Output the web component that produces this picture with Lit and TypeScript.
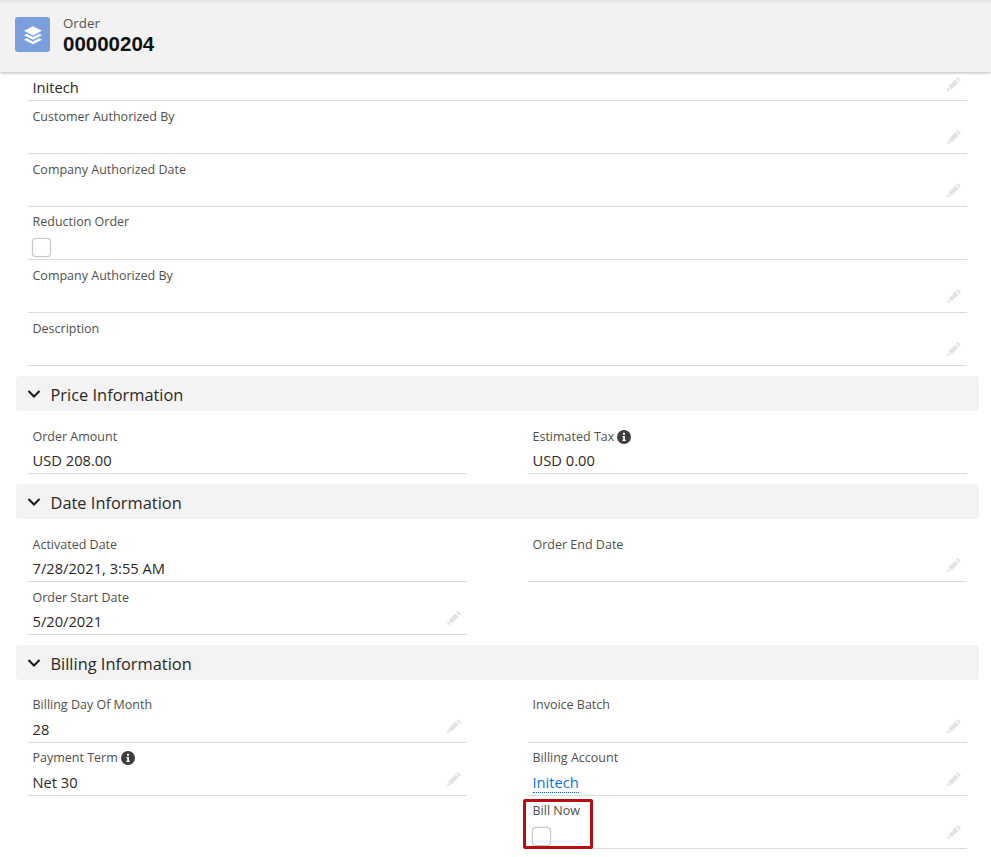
import { LitElement, html, css, svg } from "lit";
import { customElement } from "lit/decorators.js";

const pencil = html`<svg class="pencil" viewBox="0 0 14 14" aria-hidden="true"><path d="M10.8 0 14 3.2 12.4 4.8 9.2 1.6Z"/><path d="M8.4 2.4 11.6 5.6 4.6 12.6 1.4 9.4Z"/><path d="M0.8 10.2 3.8 13.2 0 14Z"/></svg>`;
const info = html`<svg class="info" viewBox="0 0 14 14" aria-hidden="true"><circle cx="7" cy="7" r="7" fill="#3e3e3c"/><rect x="6" y="2.8" width="2" height="2" fill="#fff"/><path d="M5.4 6h2.6v3.8h.8v1.2H5.4V9.8h.8V7.2h-.8Z" fill="#fff"/></svg>`;
const chevron = svg`<path d="M2.5 5 8 10.5 13.5 5" fill="none" stroke="#181818" stroke-width="2"/>`;

type F = { label: string; value?: string; edit?: boolean; info?: boolean; check?: boolean; link?: boolean; mark?: boolean; high?: boolean };

@customElement("app-root")
export class AppRoot extends LitElement {
  static styles = css`
    :host { display: block; height: 857px; overflow: hidden; background: #fff; font-family: "Open Sans", "Noto Sans", sans-serif; color: #181818; }
    .head { height: 72px; box-sizing: border-box; padding: 0 0 3px 15px; background: linear-gradient(#e4e4e4, #f2f2f2 4px); display: flex; align-items: center; gap: 13px; box-shadow: 0 1px 3px rgba(0,0,0,.28); position: relative; }
    .logo { width: 35px; height: 35px; border-radius: 3px; background: #7b9fdc; display: flex; align-items: center; justify-content: center; }
    .logo svg { width: 24px; height: 24px; fill: #fff; }
    .titles { display: flex; flex-direction: column; }
    .obj { font-size: 13.3px; line-height: 17px; padding-top: 1px; color: #555; }
    .num { font-family: "Liberation Sans", Arial, sans-serif; font-weight: 700; font-size: 20.5px; line-height: 23px; color: #111; }
    .body { padding: 0 12px 0 16px; }
    .grid { display: grid; grid-template-columns: 439px 439px; column-gap: 61px; padding: 0 12px; }
    .full { padding: 0 12px; }
    .field { height: 53px; box-sizing: border-box; border-bottom: 1px solid #dddbda; position: relative; padding: 0 4.5px; }
    .first { height: 29px; padding-top: 4px; }
    .label { font-size: 12.5px; line-height: 16px; padding-top: 8px; color: #514f4d; display: flex; align-items: center; gap: 3px; }
    .high .label { padding-top: 7px; }
    .high .value { padding-top: 6px; }
    .high .box { margin-top: 8px; }
    .value { font-size: 14.7px; line-height: 20px; padding-top: 5px; color: #2b2826; }
    .first .value { padding-top: 1px; }
    .link { color: #0a76d2; border-bottom: 1px dotted #0a76d2; }
    .pencil { position: absolute; right: 6px; bottom: 9px; width: 14px; height: 14px; fill: #e2e2e2; }
    .info { width: 14px; height: 14px; }
    .box { display: block; width: 17px; height: 17px; margin: 7px 0 0 -0.5px; border: 1px solid #c9c7c5; border-radius: 4px; background: #fff; box-shadow: 0 0 1px #bbb; }
    .mark { position: absolute; left: -5px; top: 3px; width: 70px; height: 50px; box-sizing: border-box; border: 3px solid #b80d12; border-radius: 2px; }
    .sec { height: 35px; box-sizing: border-box; padding: 2px 0 0 10px; margin-top: 10px; margin-bottom: 10px; background: #f3f3f3; border-radius: 4px; display: flex; align-items: center; gap: 8.5px; font-size: 16.4px; color: #2b2826; }
    .sec svg { width: 16px; height: 16px; margin-top: -2px; }
  `;

  field(f: F, first = false) {
    return html`<div class="field ${first ? "first" : ""} ${f.high ? "high" : ""}">
      ${f.label ? html`<div class="label">${f.label}${f.info ? info : ""}</div>` : ""}
      ${f.check ? html`<span class="box"></span>` : f.value ? html`<div class="value">${f.link ? html`<span class="link">${f.value}</span>` : f.value}</div>` : ""}
      ${f.edit ? pencil : ""}
      ${f.mark ? html`<div class="mark"></div>` : ""}
    </div>`;
  }

  section(title: string, fields: (F | null)[]) {
    return html`
      <div class="sec"><svg viewBox="0 0 16 16">${chevron}</svg><span>${title}</span></div>
      <div class="grid">${fields.map((f) => (f ? this.field(f) : html`<div></div>`))}</div>`;
  }

  render() {
    return html`
      <div class="head">
        <div class="logo"><svg viewBox="0 0 24 24"><path d="M12 3.2 21 7.8 12 12.4 3 7.8Z"/><path d="M5.6 10.8 12 14.1 18.4 10.8 21 12.2 12 16.8 3 12.2Z"/><path d="M5.6 15.3 12 18.6 18.4 15.3 21 16.7 12 21.3 3 16.7Z"/></svg></div>
        <div class="titles"><span class="obj">Order</span><span class="num">00000204</span></div>
      </div>
      <div class="body">
        <div class="full">
          ${this.field({ label: "", value: "Initech", edit: true }, true)}
          ${this.field({ label: "Customer Authorized By", edit: true })}
          ${this.field({ label: "Company Authorized Date", edit: true })}
          ${this.field({ label: "Reduction Order", check: true, high: true })}
          ${this.field({ label: "Company Authorized By", edit: true })}
          ${this.field({ label: "Description", edit: true })}
        </div>
        ${this.section("Price Information", [
          { label: "Order Amount", value: "USD 208.00" },
          { label: "Estimated Tax", value: "USD 0.00", info: true },
        ])}
        ${this.section("Date Information", [
          { label: "Activated Date", value: "7/28/2021, 3:55 AM" },
          { label: "Order End Date", edit: true },
          { label: "Order Start Date", value: "5/20/2021", edit: true },
          null,
        ])}
        ${this.section("Billing Information", [
          { label: "Billing Day Of Month", value: "28", edit: true, high: true },
          { label: "Invoice Batch", edit: true, high: true },
          { label: "Payment Term", value: "Net 30", edit: true, info: true, high: true },
          { label: "Billing Account", value: "Initech", edit: true, link: true, high: true },
          null,
          { label: "Bill Now", check: true, edit: true, mark: true, high: true },
        ])}
      </div>
    `;
  }
}
